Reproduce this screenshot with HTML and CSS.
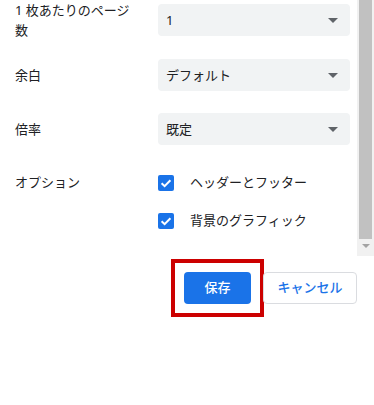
FILE: index.html
```html
<!DOCTYPE html>
<html lang="ja">
<head>
<meta charset="utf-8">
<link rel="stylesheet" href="styles.css">
</head>
<body>
<div class="dialog">
  <div class="scroll-area">
    <div class="settings">
      <div class="row r1">
        <div class="label narrow">1 枚あたりのページ数</div>
        <div class="select"><span>1</span><span class="arrow"></span></div>
      </div>
      <div class="row r2">
        <div class="label">余白</div>
        <div class="select"><span>デフォルト</span><span class="arrow"></span></div>
      </div>
      <div class="row r3">
        <div class="label">倍率</div>
        <div class="select"><span>既定</span><span class="arrow"></span></div>
      </div>
      <div class="row options">
        <div class="label opt-label">オプション</div>
        <div class="checks">
          <div class="check">
            <span class="box"><svg viewBox="0 0 16 16" width="16" height="16"><path d="M3.6 8.2 L6.6 11.1 L12.4 5.2" fill="none" stroke="#fff" stroke-width="2"/></svg></span>
            <span class="check-text">ヘッダーとフッター</span>
          </div>
          <div class="check">
            <span class="box"><svg viewBox="0 0 16 16" width="16" height="16"><path d="M3.6 8.2 L6.6 11.1 L12.4 5.2" fill="none" stroke="#fff" stroke-width="2"/></svg></span>
            <span class="check-text">背景のグラフィック</span>
          </div>
        </div>
      </div>
    </div>
    <div class="scrollbar">
      <div class="thumb"></div>
      <div class="down"></div>
    </div>
  </div>
  <div class="buttons">
    <div class="save-wrap">
      <button class="btn primary">保存</button>
    </div>
    <button class="btn secondary">キャンセル</button>
  </div>
</div>
</body>
</html>
```
FILE: styles.css
```css
html, body {
  margin: 0;
  padding: 0;
  background: #fff;
}
body {
  font-family: "Noto Sans", "Noto Sans CJK JP", sans-serif;
  font-size: 13px;
  color: #202124;
}
.dialog {
  width: 374px;
  min-height: 405px;
}
.scroll-area {
  display: flex;
  height: 256px;
}
.settings {
  flex: 1;
  padding: 0 7px 0 15px;
}
.row {
  display: grid;
  grid-template-columns: 130px 1fr;
  column-gap: 13px;
  align-items: center;
}
.r1 { height: 40px; }
.r2 { margin-top: 19px; }
.r3 { margin-top: 22px; }
.options {
  margin-top: 22px;
  align-items: start;
}
.label {
  line-height: 20px;
}
.narrow {
  max-width: 120px;
}
.opt-label {
  line-height: 30px;
}
.select {
  height: 32px;
  box-sizing: border-box;
  background: #f1f3f4;
  border-radius: 4px;
  display: flex;
  align-items: center;
  justify-content: space-between;
  padding: 0 8px 0 8px;
  line-height: 20px;
}
.arrow {
  width: 0;
  height: 0;
  border-left: 5px solid transparent;
  border-right: 5px solid transparent;
  border-top: 5px solid #5f6368;
  margin-right: 4px;
}
.checks {
  display: flex;
  flex-direction: column;
  gap: 6px;
}
.check {
  height: 32px;
  display: flex;
  align-items: center;
  gap: 16px;
}
.check-text {
  line-height: 20px;
  margin-top: -3px;
}
.box {
  width: 16px;
  height: 16px;
  border-radius: 2px;
  background: #1a73e8;
  display: block;
}
.box svg { display: block; }
.scrollbar {
  width: 17px;
  background: #f1f1f1;
  display: flex;
  flex-direction: column;
  align-items: center;
}
.thumb {
  width: 13px;
  height: 239px;
  background: #c1c1c1;
}
.down {
  margin-top: 5px;
  width: 0;
  height: 0;
  border-left: 4px solid transparent;
  border-right: 4px solid transparent;
  border-top: 4px solid #a3a3a3;
}
.buttons {
  display: flex;
  justify-content: flex-end;
  align-items: flex-start;
  gap: 12px;
  padding: 16px 17px 0 0;
}
.save-wrap {
  width: 67px;
  height: 32px;
  outline: 4px solid #cc0000;
  outline-offset: 9px;
}
.btn {
  height: 32px;
  box-sizing: border-box;
  border-radius: 4px;
  font-family: "Noto Sans", "Noto Sans CJK JP", sans-serif;
  font-size: 13px;
  font-weight: 500;
  line-height: 20px;
  padding: 0 0 3px 0;
  cursor: pointer;
  display: block;
}
.primary {
  width: 67px;
  background: #1a73e8;
  color: #fff;
  border: none;
}
.secondary {
  width: 94px;
  background: #fff;
  color: #1a73e8;
  border: 1px solid #dadce0;
}
```
